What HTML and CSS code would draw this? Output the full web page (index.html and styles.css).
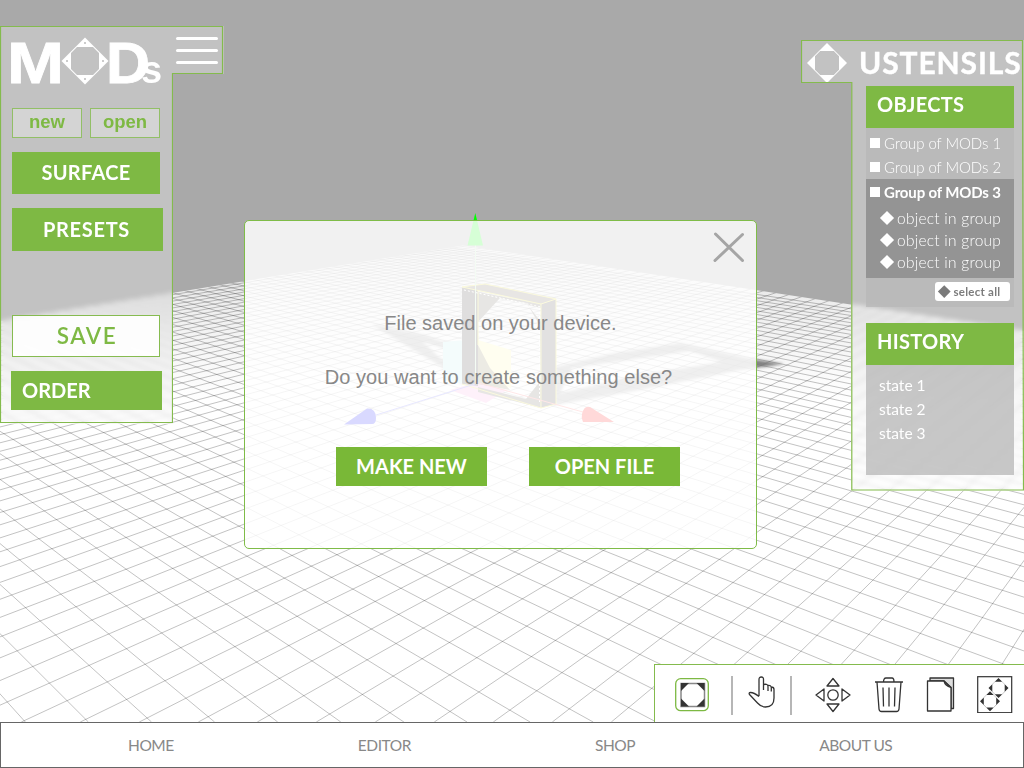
FILE: index.html
```html
<!DOCTYPE html>
<html lang="en">
<head>
<meta charset="utf-8">
<title>MODs editor</title>
<link rel="stylesheet" href="styles.css">
</head>
<body>
<div class="app">
  <main class="stage">
    <svg class="scene" width="1024" height="722" viewBox="0 0 1024 722">
      <defs>
        <clipPath id="floor-clip"><path d="M463 245.5L1024 331V722H0V321Z"/></clipPath>
        <filter id="soft"><feGaussianBlur stdDeviation="1.5"/></filter>
        <linearGradient id="haze" x1="0" y1="245" x2="0" y2="400" gradientUnits="userSpaceOnUse">
          <stop offset="0" stop-color="#dcdcdc"/><stop offset=".35" stop-color="#ededed"/><stop offset="1" stop-color="#fff"/>
        </linearGradient>
      </defs>
      <path d="M463 245.5L1024 331V722H0V321Z" fill="url(#haze)"/>
      <g clip-path="url(#floor-clip)"><path id="grid" class="grid"/></g>
      <g filter="url(#soft)" fill="#777" fill-opacity=".72" fill-rule="evenodd">
        <path d="M371 324L425 335L463 350V385L442 367ZM422 341L440 358L463 368V355Z"/>
        <path d="M555 367L610 354L680 343L757 360L784 364L740 370L640 390L555 405ZM572 368L690 351L722 362L640 375L560 393Z"/>
        <path d="M752 359L784 364L752 368Z"/>
      </g>
      <path d="M443 342L478 339V386L443 380Z" fill="#b8ecec"/>
      <path d="M478 340L511 350V388L478 381Z" fill="#fbf7a0"/>
      <path d="M450 390L478 382L507 390L486 403Z" fill="#f9a8e0"/>
      <path d="M462 287L485 284L556 299L541 304Z" fill="#6e645a"/>
      <path d="M462 287L478 290V386L462 384Z" fill="#3c3432"/>
      <path d="M478 292L541 304V308L528 305L540 326L541 408L478 392V387L526 399L541 380V322L526 303L500 298L478 322Z" fill="#6b655a"/>
      <path d="M478 345L490 368L510 390L478 384Z" fill="#8c8258"/>
      <path d="M541 304L556 299V404L541 408Z" fill="#4a4445"/>
      <path d="M462 287L485 284L556 299L541 304ZM478 290V345M541 304V408L556 404V299M462 384L541 408" fill="none" stroke="#e5dc2d"/>
      <path d="M464 290L541 307" fill="none" stroke="#fff" stroke-dasharray="2 2"/>
      <path d="M539.500 308V402" fill="none" stroke="#fff" stroke-dasharray="2 2"/>
      <path d="M475.500 245V384" stroke="#b8e8b8"/>
      <path d="M376 415L475 384" stroke="#7070ff"/>
      <path d="M475 382L583 412" stroke="#ff7070"/>
      <path d="M475.300 213L483 245.500H467.500Z" fill="#0f0"/>
      <path d="M344 424.500L367 408.500Q376 408 376 418Q376 424 372 424Z" fill="#1414ff"/>
      <path d="M614 422H583Q581 418 582 414Q584 405 590 407Z" fill="#ff1414"/>
    </svg>

    <aside class="panel tools">
      <svg class="outline" width="224" height="398" viewBox="0 0 224 398"><path d="M.5 397V.5H222.500V47.500H172.500V396.500H.5"/></svg>
      <header class="brand">
        <h1 class="logo"><span class="logo-m">M</span><svg class="logo-mark" width="48" height="48" viewBox="-24 -24 48 48"><path fill="#fff" fill-rule="evenodd" d="M0-23.500L23.500 0L0 23.500L-23.500 0ZM-8-14L-14-8V8L-8 14H8L14 8V-8L8-14Z"/><g fill="#bbb"><circle cy="-18" r="1"/><circle cy="18" r="1"/><circle cx="-18" r="1"/><circle cx="18" r="1"/></g></svg><span class="logo-d">D</span><span class="logo-s">s</span></h1>
        <div class="burger"><i></i><i></i><i></i></div>
      </header>
      <div class="file-row"><button class="ghost">new</button><button class="ghost">open</button></div>
      <button class="solid surface">SURFACE</button>
      <button class="solid presets">PRESETS</button>
      <button class="save">SAVE</button>
      <button class="solid order">ORDER</button>
    </aside>

    <aside class="panel utensils">
      <svg class="outline" width="223" height="451" viewBox="0 0 223 451"><path d="M.5.5H221.500L222.500 450H50.800V42.500H.5Z"/></svg>
      <header class="utensils-head">
        <svg width="42" height="42" viewBox="-21 -21 42 42"><path fill="#fff" fill-rule="evenodd" d="M0-20L20 0L0 20L-20 0ZM-6.800-12L-12-6.800V6.800L-6.800 12H6.800L12 6.800V-6.800L6.800-12Z"/></svg>
        <h2>USTENSILS</h2>
      </header>
      <section class="card">
        <h3>OBJECTS</h3>
        <div class="objects">
          <p class="group"><i class="square"></i>Group of MODs 1</p>
          <p class="group"><i class="square"></i>Group of MODs 2</p>
          <div class="active">
            <p class="group"><i class="square"></i><b>Group of MODs 3</b></p>
            <p class="item"><i class="diamond"></i>object in group</p>
            <p class="item"><i class="diamond"></i>object in group</p>
            <p class="item"><i class="diamond"></i>object in group</p>
          </div>
          <button class="select-all"><i class="diamond small"></i>select all</button>
        </div>
      </section>
      <section class="card history-card">
        <h3>HISTORY</h3>
        <div class="history"><p>state 1</p><p>state 2</p><p>state 3</p></div>
      </section>
    </aside>

    <div class="dialog">
      <svg class="close" width="32" height="32" viewBox="0 0 32 32"><path d="M2.500 2L29.500 28.500M29.500 2.500L2 28.500"/></svg>
      <p class="msg first">File saved on your device.</p>
      <p class="msg second">Do you want to create something else?</p>
      <div class="actions"><button class="solid">MAKE NEW</button><button class="solid">OPEN FILE</button></div>
    </div>

    <div class="toolbar">
      <svg class="t-frame" width="34" height="34" viewBox="0 0 34 34"><rect x=".7" y=".7" width="32.600" height="32" rx="5" fill="none" stroke="#7db943" stroke-width="1.300"/><rect x="6" y="5.500" width="23.500" height="23" fill="#fff" stroke="#888" stroke-width="1.500"/><path fill="#333" d="M6 5H14L6 13ZM29.500 5H21.500L29.500 13ZM6 28.500H14L6 20.500ZM29.500 28.500H21.500L29.500 20.500Z"/></svg>
      <i class="sep sep-a"></i>
      <svg class="t-hand line" width="28" height="33" viewBox="0 0 28 33"><path d="M11 20V3.500Q11 1 13.300 1T15.500 3.500V14M15.500 8.500Q20 7.500 20 10.500V15M20 9.500Q23 9 23.300 11.500V15.500M23.300 11Q26 11 26 13.500V22Q26 31 17.500 31Q13 31 9.500 27L1.500 18.500Q.5 16.500 2.500 16.500Q6 16.500 11 20.500"/></svg>
      <i class="sep sep-b"></i>
      <svg class="t-move line" width="36" height="36" viewBox="-18 -18 36 36"><circle r="5.200"/><path d="M0-16.500L6-9H-6ZM0 16.500L6 9H-6ZM-17 0L-9-6V6ZM17 0L9-6V6Z"/></svg>
      <svg class="t-trash line" width="30" height="36" viewBox="0 0 30 36"><path d="M1 5H29M3 5L5 32Q5.200 34.500 7.500 34.500H22.500Q24.800 34.500 25 32L27 5M9.500 5Q9.500 1 12 1H18Q20 1 20 5M9 10.500L9.500 29.500M15 10.500V29.500M21 10.500L20.500 29.500"/></svg>
      <svg class="t-copy line" width="30" height="36" viewBox="0 0 30 36"><path fill="#ddd" d="M4 4V1H27.500V31.500H25V10.500L18 4Z"/><path fill="#fff" d="M1.500 4H18L25 10.500V34H1.500Z"/><path d="M18 4Q19 8.500 25 10.500"/></svg>
      <svg class="t-group" width="36" height="37" viewBox="0 0 36 37"><rect x=".7" y=".7" width="34" height="36" fill="#fff" stroke="#333" stroke-width="1.200"/><g fill="#333" fill-rule="evenodd"><path id="piece" d="M21.500 2L31.500 12L21.500 22L11.500 12ZM18 5.800L15.300 8.500V15.500L18 18.200H25L27.700 15.500V8.500L25 5.800Z"/><use href="#piece" x="-8.500" y="13.300"/></g></svg>
    </div>
  </main>
  <nav class="nav"><a>HOME</a><a>EDITOR</a><a>SHOP</a><a>ABOUT US</a></nav>
</div>
<script src="grid.js"></script>
</body>
</html>
```
FILE: styles.css
```css
* { box-sizing: border-box; margin: 0; padding: 0; }
body { width: 1024px; height: 768px; overflow: hidden; font-family: Lato, "Open Sans", sans-serif; }
button { font: inherit; border: 0; background: none; display: block; }
i { display: block; }
.app { display: flex; flex-direction: column; height: 768px; }
.stage { position: relative; height: 722px; background: #a9a9a9; overflow: hidden; }
.scene { display: block; }
.grid { fill: none; stroke: #000; stroke-opacity: .27; stroke-width: .9; }

.panel { position: absolute; background: rgba(255,255,255,.29); backdrop-filter: blur(2.5px); }
.outline { position: absolute; left: 0; top: 0; fill: none; stroke: #84bb4d; stroke-width: 1.2; pointer-events: none; }
.solid { background: #7eb944; color: #fff; font-weight: 700; font-size: 20px; line-height: 24px; letter-spacing: .3px; padding-bottom: 2px; }

.tools { left: 0; top: 26px; width: 224px; height: 398px; padding-left: 12px; clip-path: polygon(0 0, 100% 0, 100% 48px, 173px 48px, 173px 100%, 0 100%); }
.brand { display: flex; height: 82px; }
.logo { display: flex; width: 164px; font: 700 58px/66px "Liberation Sans", Arial, sans-serif; color: #fff; padding-top: 4px; }
.logo-m { width: 49px; margin-left: -5px; transform: scaleX(1.18); transform-origin: left; -webkit-text-stroke: .8px #fff; }
.logo-mark { margin: 7px 0 0 5px; }
.logo-d { margin-left: -3px; transform: scaleX(1.05); transform-origin: left; -webkit-text-stroke: .8px #fff; }
.logo-s { font-size: 38px; line-height: 80px; margin-left: -7px; }
.burger { display: flex; flex-direction: column; gap: 9px; padding-top: 10.500px; }
.burger i { width: 42px; height: 3px; border-radius: 2px; background: #fff; }
.file-row { display: flex; gap: 8px; }
.ghost { width: 70px; height: 30px; border: 1.500px solid #92bf66; background: rgba(255,255,255,.3); color: #7eb944; font: 700 18.500px/24px "Liberation Sans", Arial, sans-serif; padding-bottom: 2px; }
.surface { width: 148px; height: 42px; margin-top: 14px; }
.presets { width: 151px; height: 43px; margin-top: 14px; letter-spacing: .7px; padding-right: 2px; }
.save { width: 148px; height: 42px; margin-top: 64px; background: rgba(255,255,255,.9); border: 1.500px solid #86bb50; color: #7eb944; font-weight: 600; font-size: 22.500px; letter-spacing: 1.500px; padding: 0 0 2px 2px; }
.order { width: 151px; height: 39px; margin: 14px 0 0 -1px; padding-left: 11px; text-align: left; letter-spacing: 0; }

.utensils { left: 801px; top: 40px; width: 223px; height: 451px; padding-left: 65px; clip-path: polygon(0 0, 100% 0, 100% 100%, 50px 100%, 50px 43px, 0 43px); }
.utensils-head { display: flex; gap: 11px; height: 46px; margin-left: -60px; color: #fff; padding-top: 2px; }
.utensils-head h2 { font-size: 30px; line-height: 40px; letter-spacing: .9px; white-space: nowrap; -webkit-text-stroke: .4px #fff; }
.card { width: 148px; }
.card h3 { height: 42px; background: #7eb944; color: #fff; font-size: 20px; line-height: 37px; padding-left: 11px; letter-spacing: .3px; }
.objects { height: 179px; background: rgba(183,183,183,.77); color: #fff; font-size: 15px; padding-top: 3px; }
.group { display: flex; align-items: center; gap: 4px; height: 24px; padding-left: 4px; font-weight: 300; white-space: nowrap; letter-spacing: -.05px; }
.group b { font-weight: 700; font-size: 15px; letter-spacing: -.15px; }
.square { width: 10px; height: 10px; background: #fff; }
.active { height: 99px; background: #949494; padding-top: 1px; }
.item { display: flex; align-items: center; gap: 5px; height: 22px; padding-left: 16px; font-weight: 300; font-size: 15.500px; letter-spacing: .25px; }
.active .group + .item { margin-top: 3px; }
.diamond { width: 10px; height: 10px; background: #fff; transform: rotate(45deg); }
.small { width: 8.500px; height: 8.500px; background: #7a7a7a; }
.select-all { display: flex; align-items: center; gap: 5px; width: 75px; height: 19px; margin: 4px 0 0 69px; padding: 0 0 1px 5px; background: #fff; border-radius: 3px; color: #7c7c7c; font-size: 11.500px; letter-spacing: .25px; font-weight: 700; }
.history-card { margin-top: 16px; }
.history { height: 110px; background: rgba(183,183,183,.77); color: #fff; font-size: 15.500px; line-height: 24px; padding: 8px 0 0 13px; }

.dialog { position: absolute; left: 244px; top: 220px; width: 513px; height: 329px; border: 1.500px solid #7fbc48; border-radius: 5px; background: rgba(255,255,255,.84); }
.close { display: block; margin: 11px 0 0 467.500px; fill: none; stroke: #a5a5a5; stroke-width: 3; stroke-linecap: round; }
.msg { font: 20px/24px "Liberation Sans", Arial, sans-serif; color: #888; text-align: center; }
.first { margin-top: 47px; }
.second { margin-top: 30px; padding-right: 4px; letter-spacing: .05px; }
.actions { display: flex; gap: 42px; margin: 58px 0 0 91px; }
.actions .solid { width: 151px; height: 39px; background: #79b837; letter-spacing: 0; }

.toolbar { position: absolute; left: 654px; top: 664px; width: 370px; height: 58px; display: flex; background: #fff; border: solid #84bb4d; border-width: 1px 0 0 1px; padding: 11px 0 0 20px; }
.line { fill: none; stroke: #333; stroke-width: 1.300; stroke-linejoin: round; }
.sep { width: 2px; height: 39px; background: #b6b6b6; }
.toolbar svg { flex: none; }
.t-frame { margin-top: 2px; }
.sep-a { margin-left: 22px; }
.t-hand { margin-left: 15px; }
.sep-b { margin-left: 14px; }
.t-move { margin: 1px 0 0 23px; }
.t-trash { margin: 1px 0 0 23px; }
.t-copy { margin: 1px 0 0 22px; }
.t-group { margin-left: 21px; }

.nav { display: flex; gap: 184px; height: 46px; padding-left: 127px; border: 1px solid #666; background: #fff; color: #888; font-size: 15.500px; letter-spacing: -.45px; line-height: 44px; white-space: nowrap; }
```
FILE: grid.js
```javascript
// Floor grid: two families of lines, each fanning out from its vanishing point.
var baseY = 722, horizon = 97, d = "";
function family(vx, start, step, from, to) {
  for (var i = from; i <= to; i++) {
    var x = start + step * i;
    d += "M" + vx + " " + horizon + "L" + x.toFixed(1) + " " + baseY;
  }
}
family(-537, 25.3, 63.1, 0, 56);
family(1362, 80.3, 59, -43, 16);
document.getElementById("grid").setAttribute("d", d);
```
